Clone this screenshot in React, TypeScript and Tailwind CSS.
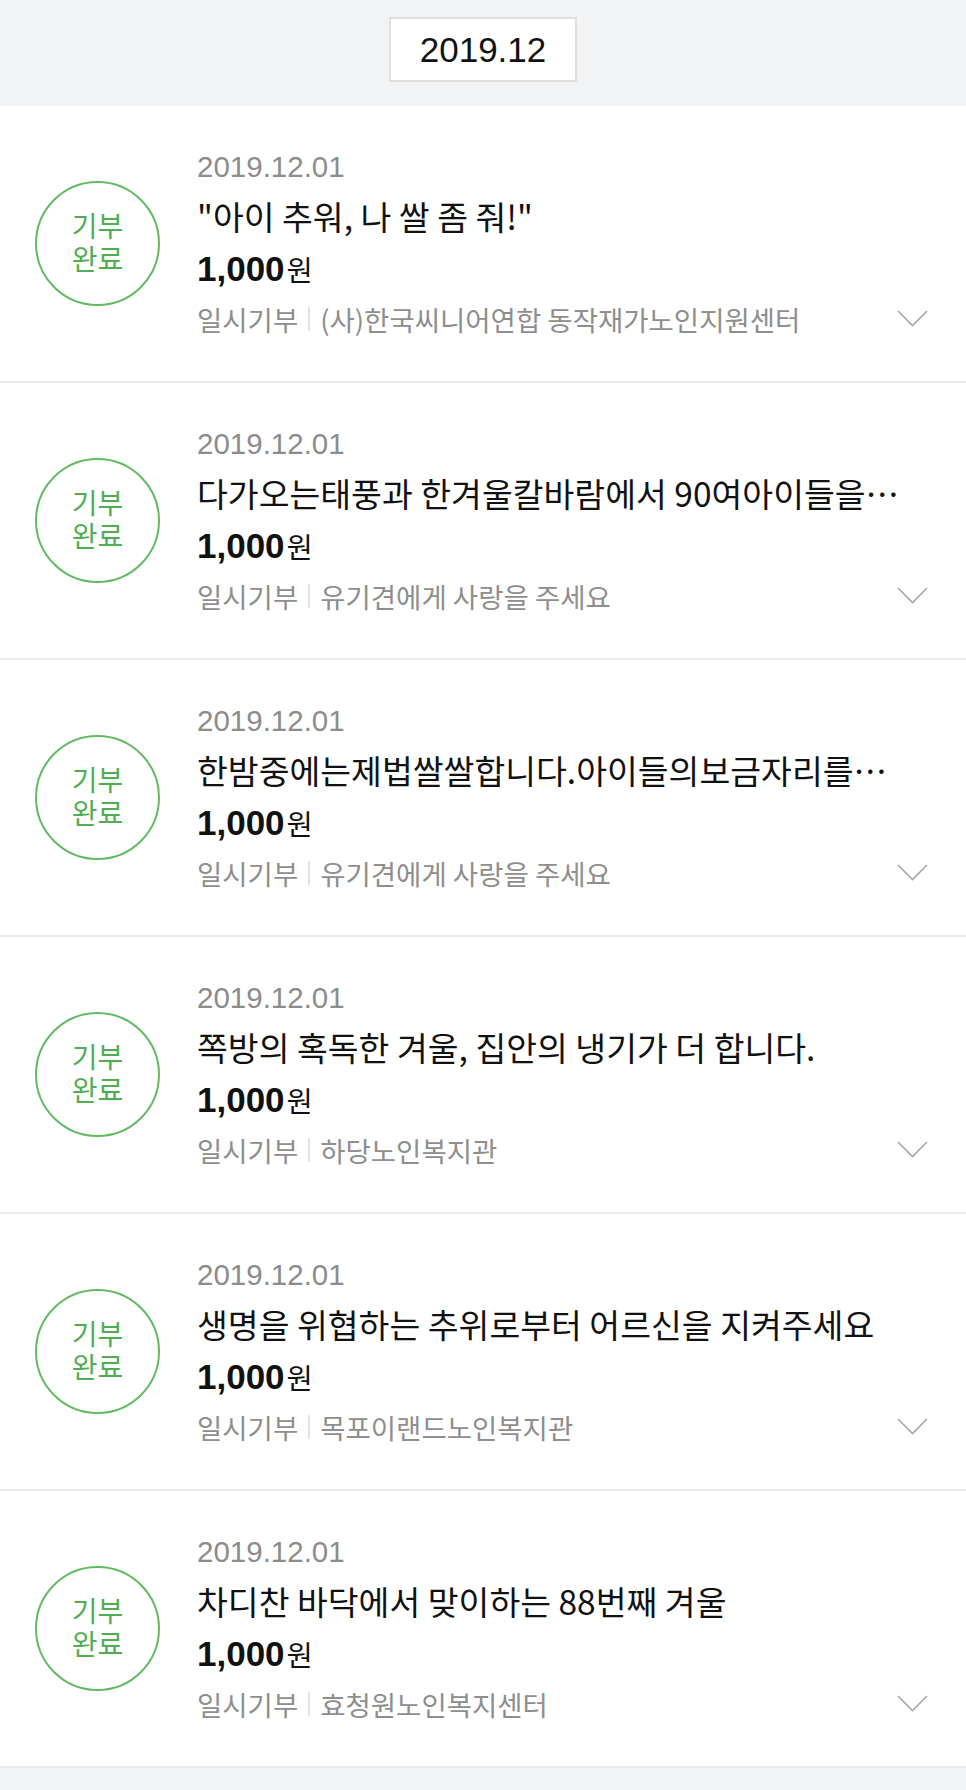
const donations = [
  {
    id: 1,
    date: "2019.12.01",
    title: "\"아이 추워, 나 쌀 좀 줘!\"",
    amount: "1,000",
    type: "일시기부",
    org: "(사)한국씨니어연합 동작재가노인지원센터",
  },
  {
    id: 2,
    date: "2019.12.01",
    title: "다가오는태풍과 한겨울칼바람에서 90여아이들을…",
    amount: "1,000",
    type: "일시기부",
    org: "유기견에게 사랑을 주세요",
  },
  {
    id: 3,
    date: "2019.12.01",
    title: "한밤중에는제법쌀쌀합니다.아이들의보금자리를…",
    amount: "1,000",
    type: "일시기부",
    org: "유기견에게 사랑을 주세요",
  },
  {
    id: 4,
    date: "2019.12.01",
    title: "쪽방의 혹독한 겨울, 집안의 냉기가 더 합니다.",
    amount: "1,000",
    type: "일시기부",
    org: "하당노인복지관",
  },
  {
    id: 5,
    date: "2019.12.01",
    title: "생명을 위협하는 추위로부터 어르신을 지켜주세요",
    amount: "1,000",
    type: "일시기부",
    org: "목포이랜드노인복지관",
  },
  {
    id: 6,
    date: "2019.12.01",
    title: "차디찬 바닥에서 맞이하는 88번째 겨울",
    amount: "1,000",
    type: "일시기부",
    org: "효청원노인복지센터",
  },
];

const latin = "font-['Liberation_Sans','Noto_Sans_CJK_KR',sans-serif]";
const korean = "font-['Noto_Sans_CJK_KR',sans-serif]";

const Chevron = () => (
  <svg width="31" height="17" viewBox="0 0 31 17" fill="none" className="shrink-0">
    <polyline points="1,1 15.5,15.5 30,1" stroke="#a6a6a6" strokeWidth="1.6" />
  </svg>
);

const DonationItem = ({ item }: { item: (typeof donations)[number] }) => (
  <li className="flex h-[277px] items-center border-b-2 border-[#ebebeb] bg-white pl-[35px] pr-[38px]">
    <div className="flex h-[125px] w-[125px] shrink-0 items-center justify-center rounded-full border-2 border-[#62bb63]">
      <p className={`${latin} text-center text-[28px] leading-[33px] text-[#4fae51]`}>
        기부
        <br />
        완료
      </p>
    </div>

    <div className="ml-[37px] min-w-0 flex-1">
      <p className={`${latin} text-[29.5px] leading-[44px] text-[#8c8c8c]`}>{item.date}</p>
      <p className={`${korean} truncate text-[33.5px] leading-[54px] text-[#111]`}>{item.title}</p>
      <p className={`${latin} text-[35px] leading-[52px] font-bold text-[#111]`}>
        {item.amount}
        <span className={`${korean} ml-[2px] text-[28.5px] leading-none font-normal`}>원</span>
      </p>
      <div className="flex h-[48px] items-center">
        <span className={`${korean} text-[27.5px] leading-[48px] text-[#8e8e8e]`}>{item.type}</span>
        <span className="mx-[10px] h-[24px] w-[2px] bg-[#e2e2e2]" />
        <span className={`${korean} truncate text-[27.5px] leading-[48px] text-[#8e8e8e]`}>{item.org}</span>
        <span className="ml-auto pl-4">
          <Chevron />
        </span>
      </div>
    </div>
  </li>
);

export default function App() {
  return (
    <div className="min-h-screen bg-[#f2f3f5]">
      <header className="flex h-[106px] justify-center pt-[17px]">
        <div className="flex h-[65px] w-[188px] items-center justify-center border-2 border-[#dfdfdf] bg-white">
          <span className={`${latin} text-[35px] leading-none text-[#111]`}>2019.12</span>
        </div>
      </header>

      <ul>
        {donations.map((item) => (
          <DonationItem key={item.id} item={item} />
        ))}
      </ul>
    </div>
  );
}
